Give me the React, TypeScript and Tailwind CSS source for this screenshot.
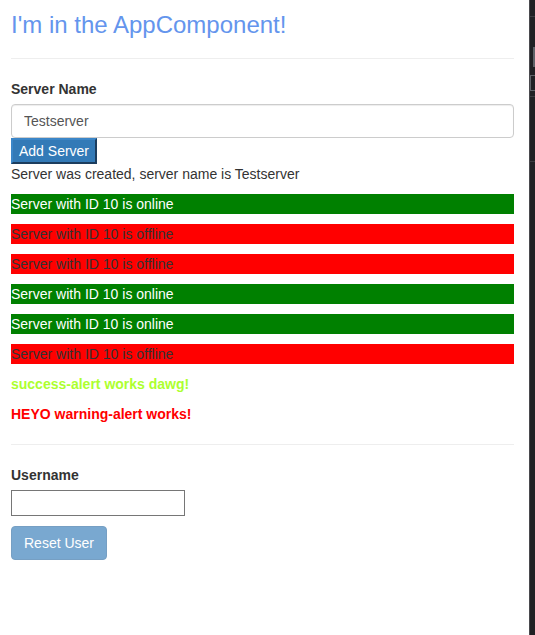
import React from 'react';

const servers = [
  { id: 10, online: true },
  { id: 10, online: false },
  { id: 10, online: false },
  { id: 10, online: true },
  { id: 10, online: true },
  { id: 10, online: false },
];

export default function App() {
  return (
    <div className="flex min-h-[635px] bg-white font-['Liberation_Sans',Arial,sans-serif] text-[14px] leading-[20px] text-[#333]">
      {/* app area */}
      <div className="w-[529px] shrink-0 pl-[11px] pr-[15px] pt-[12px]">
        <h3 className="text-[24px] leading-[26.4px] text-[#6495ed]">I'm in the AppComponent!</h3>
        <hr className="mt-[20px] mb-[20px] border-t border-[#eee]" />

        <label className="mb-[5px] block font-bold">Server Name</label>
        <input
          className="block h-[34px] w-full rounded-[4px] border border-[#ccc] px-[12px] py-[6px] text-[14px] text-[#555] shadow-[inset_0_1px_1px_rgba(0,0,0,0.075)] outline-none"
          defaultValue="Testserver"
        />
        <button className="block h-[26px] border-2 border-t-[#3b86c8] border-l-[#3b86c8] border-r-[#1c3d5e] border-b-[#1c3d5e] bg-[#337ab7] px-[6px] text-[14px] leading-[20px] text-white">
          Add Server
        </button>
        <p className="mb-[10px]">Server was created, server name is Testserver</p>

        {servers.map((s, i) => (
          <p
            key={i}
            className={
              s.online
                ? 'mb-[10px] h-[20px] bg-[#008000] text-white'
                : 'mb-[10px] h-[20px] bg-[#ff0000] text-[#333]'
            }
          >
            Server with ID {s.id} is {s.online ? 'online' : 'offline'}
          </p>
        ))}

        <p className="mb-[10px] font-bold text-[#adff2f]">success-alert works dawg!</p>
        <p className="mb-[10px] font-bold text-[#ff0000]">HEYO warning-alert works!</p>

        <hr className="mt-[20px] mb-[20px] border-t border-[#eee]" />

        <label className="mb-[5px] block font-bold">Username</label>
        <input className="block h-[26px] w-[174px] border border-[#767676] px-[2px] text-[14px] outline-none" />
        <button
          disabled
          className="mt-[10px] block h-[34px] rounded-[4px] border border-[#2e6da4] bg-[#337ab7] px-[12px] py-[6px] text-[14px] leading-[20px] text-white opacity-65"
        >
          Reset User
        </button>
      </div>

      {/* devtools edge */}
      <div className="flex flex-1 flex-col border-l border-[#4a4a4e] bg-[#202124]">
        <div className="h-[17px] border-b border-[#3c3c40]" />
        <div className="flex h-[80px] flex-col gap-[8px] border-b border-[#3c3c40] pt-[30px]">
          <div className="ml-[3px] h-[20px] w-[2px] bg-[#5f6368]" />
          <div className="h-[16px] w-full border-y border-l border-[#5f6368]" />
        </div>
        <div className="h-[65px] border-b border-[#3c3c40]" />
      </div>
    </div>
  );
}
